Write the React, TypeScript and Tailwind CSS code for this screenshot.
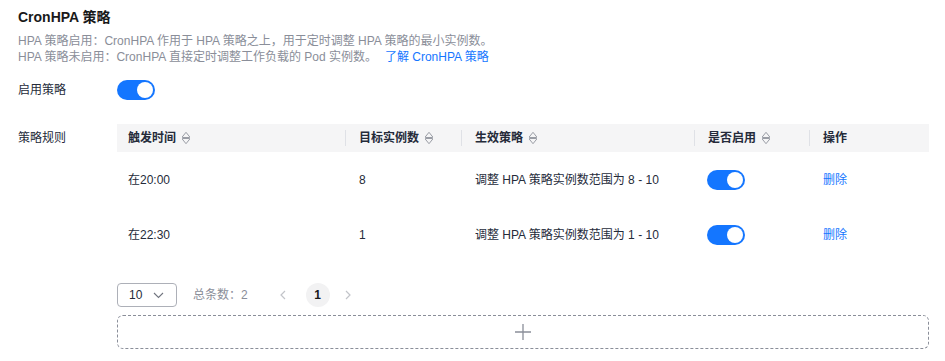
import { FC } from "react";

const rules = [
  { time: "在20:00", target: "8", policy: "调整 HPA 策略实例数范围为 8 - 10" },
  { time: "在22:30", target: "1", policy: "调整 HPA 策略实例数范围为 1 - 10" },
];

const SortIcon: FC = () => (
  <svg width="10" height="14" viewBox="0 0 10 14" className="ml-[5px] block shrink-0">
    <path d="M1.2 6 L5 1.3 L8.8 6" fill="none" stroke="#9a9da5" strokeWidth="1" />
    <rect x="1.2" y="6" width="7.6" height="2" fill="#9a9da5" />
    <path d="M1.2 8 L5 12.7 L8.8 8" fill="none" stroke="#9a9da5" strokeWidth="1" />
  </svg>
);

const Toggle: FC = () => (
  <div className="flex h-[20px] w-[38px] items-center justify-end rounded-full bg-[#1476ff] p-[2px]">
    <div className="h-[16px] w-[16px] rounded-full bg-white" />
  </div>
);

const HeadCell: FC<{ label: string; sort?: boolean; first?: boolean; w: string }> = ({
  label,
  sort,
  first,
  w,
}) => (
  <div className={`${w} flex h-full shrink-0 items-center`}>
    {!first && <div className="h-[16px] w-px shrink-0 bg-[#dfe1e6]" />}
    <div className={`${first ? "pl-[11px]" : "pl-[13px]"} flex items-center whitespace-nowrap`}>
      <span>{label}</span>
      {sort && <SortIcon />}
    </div>
  </div>
);

export default function App() {
  return (
    <div
      className="h-[361px] w-[945px] overflow-hidden bg-white pl-[18px] pt-[7px] text-[12px] text-[#252b3a]"
      style={{ fontFamily: '"Liberation Sans", "Noto Sans CJK SC", sans-serif' }}
    >
      <div className="text-[14px] font-bold leading-5 text-[#191919]">CronHPA 策略</div>

      <div className="mt-[6px] leading-4 text-[#8a8e99]">
        <div>HPA 策略启用：CronHPA 作用于 HPA 策略之上，用于定时调整 HPA 策略的最小实例数。</div>
        <div>
          HPA 策略未启用：CronHPA 直接定时调整工作负载的 Pod 实例数。
          <span className="ml-[8px] text-[#1476ff]">了解 CronHPA 策略</span>
        </div>
      </div>

      <div className="mt-[15px] flex h-[20px] items-center">
        <div className="w-[99px]">启用策略</div>
        <Toggle />
      </div>

      <div className="mt-[24px] flex items-start">
        <div className="w-[99px] leading-[28px]">策略规则</div>
        <div className="w-[812px]">
          <div className="flex h-[28px] bg-[#f5f5f6] font-semibold text-[#252b3a]">
            <HeadCell w="w-[228px]" label="触发时间" sort first />
            <HeadCell w="w-[116px]" label="目标实例数" sort />
            <HeadCell w="w-[233px]" label="生效策略" sort />
            <HeadCell w="w-[115px]" label="是否启用" sort />
            <HeadCell w="w-[120px]" label="操作" />
          </div>
          {rules.map((r) => (
            <div key={r.time} className="flex h-[55px] items-center">
              <div className="w-[228px] pl-[11px]">{r.time}</div>
              <div className="w-[116px] pl-[14px]">{r.target}</div>
              <div className="w-[233px] pl-[14px]">{r.policy}</div>
              <div className="w-[115px] pl-[13px]">
                <Toggle />
              </div>
              <div className="w-[120px] pl-[14px] text-[#1476ff]">删除</div>
            </div>
          ))}

          <div className="mt-[21px] flex h-[24px] items-center">
            <div className="flex h-[24px] w-[60px] items-center justify-between rounded-[4px] border border-[#adb0b8] pl-[11px] pr-[12px]">
              <span>10</span>
              <svg width="11" height="7" viewBox="0 0 11 7">
                <path d="M1 1 L5.5 5.5 L10 1" fill="none" stroke="#71757f" strokeWidth="1.1" />
              </svg>
            </div>
            <span className="ml-[16px] text-[#8a8e99]">总条数：2</span>
            <svg width="8" height="10" viewBox="0 0 8 10" className="ml-[31px]">
              <path d="M6 1 L2 5 L6 9" fill="none" stroke="#c2c4c9" strokeWidth="1.2" />
            </svg>
            <div className="ml-[19px] flex h-[24px] w-[24px] items-center justify-center rounded-full bg-[#f2f2f3] font-bold text-[#191919]">
              1
            </div>
            <svg width="8" height="10" viewBox="0 0 8 10" className="ml-[14px]">
              <path d="M2 1 L6 5 L2 9" fill="none" stroke="#c2c4c9" strokeWidth="1.2" />
            </svg>
          </div>

          <div className="mt-[8px] flex h-[34px] items-center justify-center rounded-[6px] border border-dashed border-[#8a8e99]">
            <svg width="18" height="18" viewBox="0 0 18 18">
              <path d="M9 1 V17 M1 9 H17" stroke="#8a8e99" strokeWidth="1.3" />
            </svg>
          </div>
        </div>
      </div>
    </div>
  );
}
